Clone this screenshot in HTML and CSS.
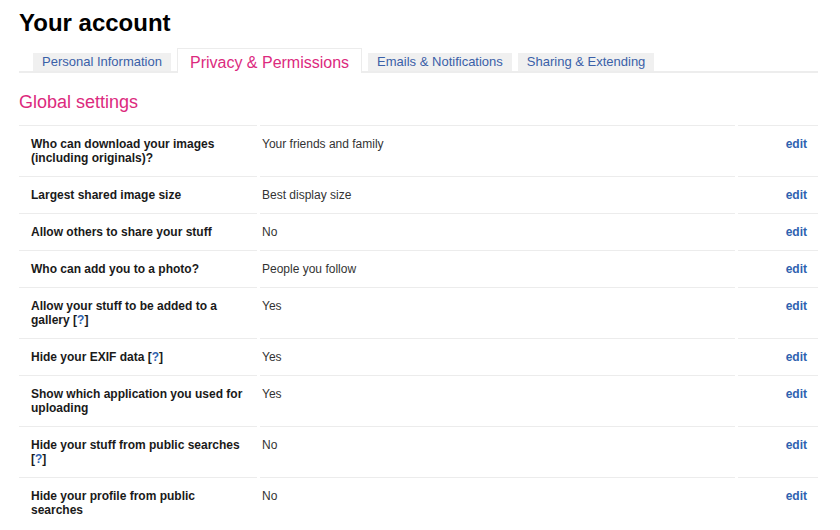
FILE: index.html
```html
<!DOCTYPE html>
<html lang="en">
<head>
    <meta charset="UTF-8" />
    <title>Your account</title>
    <link rel="stylesheet" href="styles.css">
</head>
<body>
<div class="page">
    <h1 class="page-title">Your account</h1>

    <!-- Account tabs -->
    <div class="tabs">
        <a href="#" class="tab">Personal Information</a>
        <a href="#" class="tab active">Privacy &amp; Permissions</a>
        <a href="#" class="tab">Emails &amp; Notifications</a>
        <a href="#" class="tab">Sharing &amp; Extending</a>
    </div>

    <h2 class="section-title">Global settings</h2>

    <table class="settings">
        <tr>
            <td class="label">Who can download your images (including originals)?</td>
            <td class="value">Your friends and family</td>
            <td class="action"><a href="#">edit</a></td>
        </tr>
        <tr>
            <td class="label">Largest shared image size</td>
            <td class="value">Best display size</td>
            <td class="action"><a href="#">edit</a></td>
        </tr>
        <tr>
            <td class="label">Allow others to share your stuff</td>
            <td class="value">No</td>
            <td class="action"><a href="#">edit</a></td>
        </tr>
        <tr>
            <td class="label">Who can add you to a photo?</td>
            <td class="value">People you follow</td>
            <td class="action"><a href="#">edit</a></td>
        </tr>
        <tr>
            <td class="label">Allow your stuff to be added to a gallery [<a href="#" class="help">?</a>]</td>
            <td class="value">Yes</td>
            <td class="action"><a href="#">edit</a></td>
        </tr>
        <tr>
            <td class="label">Hide your EXIF data [<a href="#" class="help">?</a>]</td>
            <td class="value">Yes</td>
            <td class="action"><a href="#">edit</a></td>
        </tr>
        <tr>
            <td class="label">Show which application you used for uploading</td>
            <td class="value">Yes</td>
            <td class="action"><a href="#">edit</a></td>
        </tr>
        <tr>
            <td class="label">Hide your stuff from public searches [<a href="#" class="help">?</a>]</td>
            <td class="value">No</td>
            <td class="action"><a href="#">edit</a></td>
        </tr>
        <tr>
            <td class="label">Hide your profile from public searches</td>
            <td class="value">No</td>
            <td class="action"><a href="#">edit</a></td>
        </tr>
    </table>
</div>
</body>
</html>
```

FILE: styles.css
```css
body {
    margin: 0;
    font-family: Arial, "Liberation Sans", sans-serif;
    background: #fff;
    color: #222;
}
a {
    text-decoration: none;
}
.page {
    padding: 0 22px 0 19px;
}
/* Heading */
.page-title {
    margin: 0;
    padding-top: 9px;
    font-size: 24px;
    line-height: 28px;
    font-weight: bold;
    color: #000;
}
/* Tabs */
.tabs {
    display: flex;
    align-items: flex-end;
    margin-top: 11px;
    padding-left: 14px;
    border-bottom: 2px solid #ededed;
}
.tab {
    height: 18px;
    line-height: 18px;
    padding: 0 9px 0 9px;
    margin-right: 6px;
    background: #f0f0f0;
    color: #3a60a8;
    font-size: 13px;
}
.tab.active {
    height: 20px;
    line-height: 20px;
    padding: 4px 12px 0 12px;
    margin-bottom: -2px;
    background: #fff;
    border: 1px solid #ececec;
    border-bottom: none;
    color: #dc2a7e;
    font-size: 16px;
}
.tab:last-child {
    margin-right: 0;
}
.section-title {
    margin: 18px 0 12px;
    font-size: 18px;
    line-height: 22px;
    font-weight: normal;
    color: #dc2a7e;
}
/* Settings table */
.settings {
    border-collapse: separate;
    border-spacing: 3px 0;
    margin-left: -3px;
    width: calc(100% + 6px);
    table-layout: fixed;
    font-size: 12px;
    line-height: 14px;
}
.settings td {
    border-top: 1px solid #ececec;
    padding: 11px 0 11px 0;
    vertical-align: top;
}
.settings .label {
    width: 215px;
    padding-left: 12px;
    padding-right: 11px;
    font-weight: bold;
    color: #1a1a1a;
}
.settings .value {
    padding-left: 2px;
    color: #333;
}
.settings .action {
    width: 69px;
    padding-right: 11px;
    text-align: right;
}
.settings .action a {
    color: #2f62b0;
    font-weight: bold;
}
.help {
    color: #2f62b0;
}
```
